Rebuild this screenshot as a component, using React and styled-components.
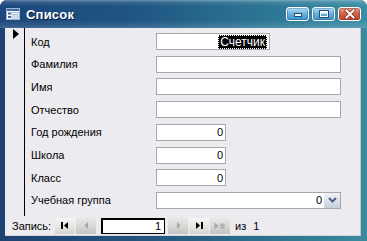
import React from 'react';
import styled, { createGlobalStyle } from 'styled-components';

const Global = createGlobalStyle`
  html, body { margin: 0; padding: 0; background: #ffffff; }
  body {
    width: 367px; height: 241px; overflow: hidden;
    font-family: "Liberation Sans", Arial, sans-serif;
    -webkit-font-smoothing: none;
  }
`;

const Window = styled.div`
  width: 367px;
  height: 241px;
  display: flex;
  flex-direction: column;
  box-sizing: border-box;
  border-radius: 7px 7px 0 0;
  overflow: hidden;
  background: linear-gradient(to right, #1e4272 0%, #23557e 40%, #2f7892 80%, #3a8a9e 100%);
`;

const TitleBar = styled.div`
  height: 28px;
  flex: none;
  display: flex;
  align-items: center;
  padding: 0 6px 0 6px;
  box-sizing: border-box;
  background:
    linear-gradient(to bottom,
      rgba(255,255,255,0.35) 0px,
      rgba(255,255,255,0.12) 2px,
      rgba(255,255,255,0.0) 6px,
      rgba(0,0,0,0.0) 20px,
      rgba(255,255,255,0.10) 26px,
      rgba(255,255,255,0.18) 28px),
    linear-gradient(to right, #1c477c 0%, #1f5482 35%, #2d7896 75%, #3c8ea6 100%);
`;

const TitleText = styled.span`
  margin-left: 6px;
  color: #ffffff;
  font-weight: bold;
  font-size: 13px;
  letter-spacing: 0.2px;
  text-shadow: 1px 1px 0 #0b2240;
  flex: 1;
`;

const CaptionButtons = styled.div`
  display: flex;
  gap: 3px;
  margin-top: -1px;
`;

const CaptionButton = styled.div`
  width: 23px;
  height: 14px;
  box-sizing: border-box;
  border: 1px solid #ffffff;
  border-radius: 3px;
  display: flex;
  align-items: center;
  justify-content: center;
  background: ${p => p.$close
    ? 'linear-gradient(to bottom, #e8a090 0%, #d0664c 45%, #b8452e 100%)'
    : 'linear-gradient(to bottom, #b6def4 0%, #6cb4e0 45%, #3d8fc8 100%)'};
  box-shadow: inset 0 0 0 1px ${p => (p.$close ? 'rgba(120,30,10,0.35)' : 'rgba(20,70,120,0.3)')};
`;

const Body = styled.div`
  flex: 1;
  display: flex;
  padding: 0 6px 5px 5px;
  min-height: 0;
`;

const Content = styled.div`
  flex: 1;
  display: flex;
  flex-direction: column;
  background: #ecebef;
  border-right: 1px solid #c9c7cd;
  border-bottom: 1px solid #d8d6dc;
`;

const FormArea = styled.div`
  height: 189px;
  display: flex;
`;

const RecordSelector = styled.div`
  width: 19px;
  border-right: 1px solid #000000;
  box-sizing: content-box;
  padding-top: 1px;
  display: flex;
  justify-content: flex-end;
`;

const Pointer = styled.div`
  width: 0;
  height: 0;
  margin-right: 5px;
  border-top: 5px solid transparent;
  border-bottom: 5px solid transparent;
  border-left: 6px solid #000000;
`;

const Fields = styled.div`
  flex: 1;
  padding: 5px 0 0 6px;
  display: grid;
  grid-template-columns: 125px auto;
  grid-auto-rows: 17px;
  row-gap: 5.71px;
  align-items: center;
  align-content: start;
`;

const Label = styled.div`
  font-size: 11px;
  color: #000000;
  white-space: nowrap;
`;

const TextBox = styled.div`
  width: ${p => p.$w}px;
  height: 17px;
  box-sizing: border-box;
  border: 1px solid #a8a8ac;
  background: #ffffff;
  display: flex;
  align-items: center;
  justify-content: flex-end;
  padding-right: 2px;
  font-size: 11px;
  color: #000000;
`;

const Selected = styled.span`
  background: #000000;
  color: #ffffff;
  font-size: 12px;
  height: 14px;
  line-height: 14px;
  padding: 0 2px;
  outline: 1px dotted #ffffff;
  outline-offset: -1px;
`;

const ComboBox = styled.div`
  width: 185px;
  height: 17px;
  box-sizing: border-box;
  border: 1px solid #a8a8ac;
  background: #ffffff;
  display: flex;
  align-items: center;
  font-size: 11px;
`;

const ComboValue = styled.span`
  flex: 1;
  text-align: right;
  padding-right: 2px;
`;

const ComboButton = styled.div`
  width: 16px;
  height: 15px;
  display: flex;
  align-items: center;
  justify-content: center;
  background: linear-gradient(to bottom, #f0f3f8 0%, #d9dfe8 60%, #c6ceda 100%);
`;

const NavBar = styled.div`
  height: 19px;
  display: flex;
  align-items: center;
  padding-left: 7px;
  font-size: 11px;
  color: #000000;
`;

const NavLabel = styled.span`
  width: 43px;
  flex: none;
`;

const NavButton = styled.div`
  width: 21px;
  height: 16px;
  box-sizing: border-box;
  display: flex;
  align-items: center;
  justify-content: center;
  background: ${p => p.$active
    ? 'linear-gradient(to bottom, #f6f6f4 0%, #e6e6e2 50%, #d4d4d0 100%)'
    : 'linear-gradient(to bottom, #e8e8e6 0%, #d8d8d6 50%, #c4c4c2 100%)'};
  border-right: 1px solid #ececea;
`;

const RecordBox = styled.div`
  width: 64px;
  height: 16px;
  box-sizing: border-box;
  margin: 0 3px 0 4px;
  border: 1px solid #000000;
  border-top-width: 2px;
  border-left-width: 2px;
  background: #ffffff;
  display: flex;
  align-items: center;
  justify-content: flex-end;
  padding-right: 3px;
`;

const OfText = styled.span`
  margin-left: 4px;
  word-spacing: 4px;
`;

const FormIcon = () => (
  <svg width="14" height="12" viewBox="0 0 14 12" style={{ flex: 'none' }}>
    <rect x="0.5" y="0.5" width="13" height="11" fill="#f4f7fc" stroke="#9fb4d4" />
    <rect x="1" y="1" width="12" height="2" fill="#3f66a6" />
    <rect x="2" y="4.5" width="3" height="2" fill="#3f66a6" />
    <rect x="6" y="4.5" width="6" height="2" fill="#ffffff" stroke="#7d96c0" strokeWidth="0.6" />
    <rect x="2" y="8" width="3" height="2" fill="#3f66a6" />
    <rect x="6" y="8" width="6" height="2" fill="#ffffff" stroke="#7d96c0" strokeWidth="0.6" />
  </svg>
);

const MinGlyph = () => (
  <svg width="10" height="8" viewBox="0 0 10 8">
    <rect x="1.5" y="3.5" width="7" height="3" fill="#ffffff" stroke="#1d4f7a" />
  </svg>
);

const MaxGlyph = () => (
  <svg width="12" height="10" viewBox="0 0 12 10">
    <rect x="1.5" y="1.5" width="9" height="7" fill="none" stroke="#1d4f7a" strokeWidth="1" />
    <rect x="2.5" y="2.5" width="7" height="5" fill="none" stroke="#ffffff" strokeWidth="1" />
    <rect x="3" y="3" width="6" height="1.5" fill="#ffffff" />
  </svg>
);

const CloseGlyph = () => (
  <svg width="12" height="10" viewBox="0 0 12 10">
    <path d="M2.5 1.5 L9.5 8.5 M9.5 1.5 L2.5 8.5" stroke="#7a2a1a" strokeWidth="3.4" strokeLinecap="square" />
    <path d="M2.5 1.5 L9.5 8.5 M9.5 1.5 L2.5 8.5" stroke="#ffffff" strokeWidth="2" strokeLinecap="square" />
  </svg>
);

const Chevron = () => (
  <svg width="9" height="6" viewBox="0 0 9 6">
    <path d="M1 1 L4.5 4.5 L8 1" fill="none" stroke="#4a5f86" strokeWidth="2" />
  </svg>
);

const FirstIcon = () => (
  <svg width="8" height="7" viewBox="0 0 8 7">
    <rect x="0" y="0" width="2" height="7" fill="#000" />
    <path d="M7 0 L7 7 L3 3.5 Z" fill="#000" />
  </svg>
);
const PrevIcon = () => (
  <svg width="5" height="7" viewBox="0 0 5 7">
    <path d="M4 0 L4 7 L0.5 3.5 Z" fill="#a6a6a6" />
  </svg>
);
const NextIcon = () => (
  <svg width="5" height="7" viewBox="0 0 5 7">
    <path d="M1 0 L1 7 L4.5 3.5 Z" fill="#a6a6a6" />
  </svg>
);
const LastIcon = () => (
  <svg width="8" height="7" viewBox="0 0 8 7">
    <path d="M1 0 L1 7 L5 3.5 Z" fill="#000" />
    <rect x="6" y="0" width="2" height="7" fill="#000" />
  </svg>
);
const NewIcon = () => (
  <svg width="12" height="8" viewBox="0 0 12 8">
    <path d="M0.5 0.5 L0.5 7.5 L4.5 4 Z" fill="#a6a6a6" />
    <path d="M8.5 1 L8.5 7 M6 2.5 L11 5.5 M11 2.5 L6 5.5" stroke="#a6a6a6" strokeWidth="1.2" />
  </svg>
);

const fields = [
  { label: 'Код', type: 'counter' },
  { label: 'Фамилия', type: 'text', w: 185 },
  { label: 'Имя', type: 'text', w: 185 },
  { label: 'Отчество', type: 'text', w: 185 },
  { label: 'Год рождения', type: 'num', w: 70, value: '0' },
  { label: 'Школа', type: 'num', w: 70, value: '0' },
  { label: 'Класс', type: 'num', w: 70, value: '0' },
  { label: 'Учебная группа', type: 'combo', value: '0' },
];

export default function App() {
  return (
    <>
      <Global />
      <Window>
        <TitleBar>
          <FormIcon />
          <TitleText>Список</TitleText>
          <CaptionButtons>
            <CaptionButton><MinGlyph /></CaptionButton>
            <CaptionButton><MaxGlyph /></CaptionButton>
            <CaptionButton $close><CloseGlyph /></CaptionButton>
          </CaptionButtons>
        </TitleBar>
        <Body>
          <Content>
            <FormArea>
              <RecordSelector>
                <Pointer />
              </RecordSelector>
              <Fields>
                {fields.map(f => (
                  <React.Fragment key={f.label}>
                    <Label>{f.label}</Label>
                    {f.type === 'counter' && (
                      <TextBox $w={114}><Selected>Счетчик</Selected></TextBox>
                    )}
                    {f.type === 'text' && <TextBox $w={f.w} />}
                    {f.type === 'num' && <TextBox $w={f.w}>{f.value}</TextBox>}
                    {f.type === 'combo' && (
                      <ComboBox>
                        <ComboValue>{f.value}</ComboValue>
                        <ComboButton><Chevron /></ComboButton>
                      </ComboBox>
                    )}
                  </React.Fragment>
                ))}
              </Fields>
            </FormArea>
            <NavBar>
              <NavLabel>Запись:</NavLabel>
              <NavButton $active><FirstIcon /></NavButton>
              <NavButton><PrevIcon /></NavButton>
              <RecordBox>1</RecordBox>
              <NavButton><NextIcon /></NavButton>
              <NavButton $active><LastIcon /></NavButton>
              <NavButton><NewIcon /></NavButton>
              <OfText>из 1</OfText>
            </NavBar>
          </Content>
        </Body>
      </Window>
    </>
  );
}
